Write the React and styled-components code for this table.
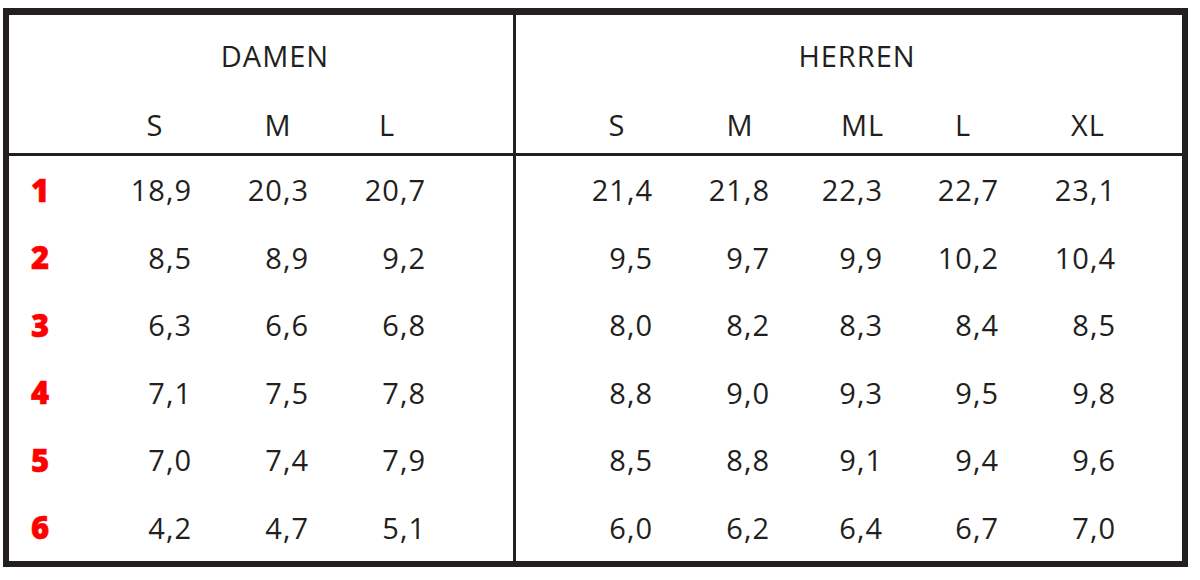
import React from 'react'
import styled, { createGlobalStyle } from 'styled-components'

const damen = [
  ['18,9', '20,3', '20,7'],
  ['8,5', '8,9', '9,2'],
  ['6,3', '6,6', '6,8'],
  ['7,1', '7,5', '7,8'],
  ['7,0', '7,4', '7,9'],
  ['4,2', '4,7', '5,1'],
]

const herren = [
  ['21,4', '21,8', '22,3', '22,7', '23,1'],
  ['9,5', '9,7', '9,9', '10,2', '10,4'],
  ['8,0', '8,2', '8,3', '8,4', '8,5'],
  ['8,8', '9,0', '9,3', '9,5', '9,8'],
  ['8,5', '8,8', '9,1', '9,4', '9,6'],
  ['6,0', '6,2', '6,4', '6,7', '7,0'],
]

// header box widths so each size letter sits over its column of numbers
const damenSizes = [['S', 74], ['M', 62], ['L', 78]]
const herrenSizes = [['S', 72], ['M', 60], ['ML', 42], ['L', 72], ['XL', 56]]

function App() {
  return (
    <>
      <GlobalStyle />
      <Frame>
        <Panel $cols="91px 94px 117px 117px 1fr" $divider>
          <Title $pad={28}>DAMEN</Title>
          <Blank />
          {damenSizes.map(([s, w]) => (
            <SizeHead key={s} $w={w}>{s}</SizeHead>
          ))}
          <Blank />
          <Line />
          {damen.map((row, i) => (
            <React.Fragment key={i}>
              <RowLabel>{i + 1}</RowLabel>
              {row.map((v, j) => (
                <Value key={j}>{v}</Value>
              ))}
              <Blank />
            </React.Fragment>
          ))}
        </Panel>
        <Panel $cols="139px 117px 113px 116px 117px 1fr">
          <Title $pad={16}>HERREN</Title>
          {herrenSizes.map(([s, w]) => (
            <SizeHead key={s} $w={w}>{s}</SizeHead>
          ))}
          <Blank />
          <Line />
          {herren.map((row, i) => (
            <React.Fragment key={i}>
              {row.map((v, j) => (
                <Value key={j}>{v}</Value>
              ))}
              <Blank />
            </React.Fragment>
          ))}
        </Panel>
      </Frame>
    </>
  )
}

export default App

const GlobalStyle = createGlobalStyle`
  body {
    margin: 0;
    background: #ffffff;
    font-family: "Open Sans", "Noto Sans", sans-serif;
  }
`

const Frame = styled.div`
  box-sizing: border-box;
  width: 1185px;
  height: 559px;
  margin: 8px 0 0 3px;
  border: 6px solid #231f20;
  border-top-width: 7px;
  display: flex;
  background: #fff;
`

const Panel = styled.div`
  display: grid;
  grid-template-columns: ${p => p.$cols};
  grid-template-rows: 81px 57px 3px repeat(6, 1fr);
  flex: ${p => (p.$divider ? '0 0 504px' : '1')};
  border-right: ${p => (p.$divider ? '3px solid #231f20' : 'none')};
  color: #231f20;
  font-size: 29px;
  letter-spacing: 1px;
`

const Title = styled.div`
  grid-column: 1 / -1;
  align-self: center;
  text-align: center;
  padding-left: ${p => p.$pad}px;
`

const SizeHead = styled.div`
  justify-self: end;
  align-self: center;
  width: ${p => p.$w}px;
  margin-right: 2px;
  text-align: center;
`

const Blank = styled.div``

const Line = styled.div`
  grid-column: 1 / -1;
  background: #231f20;
`

const Value = styled.div`
  align-self: center;
  text-align: right;
  padding-right: 2px;
`

const RowLabel = styled.div`
  align-self: center;
  padding-left: 22px;
  color: #ff0000;
  font-weight: 800;
  font-size: 31px;
  -webkit-text-stroke: 0.6px #ff0000;
`
